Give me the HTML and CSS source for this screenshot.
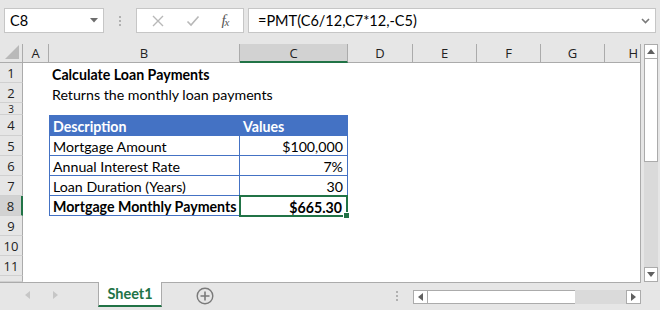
FILE: index.html
```html
<!DOCTYPE html>
<html lang="en">
<head>
    <meta charset="UTF-8">
    <title>Calculate Loan Payments</title>
    <link rel="stylesheet" href="styles.css">
</head>
<body>
    <div class="topbar">
        <div class="namebox">
            <span>C8</span>
            <svg class="caret" width="8" height="5" viewBox="0 0 8 5"><path d="M0 0h8L4 4.5z" fill="#6d6d6d"/></svg>
        </div>
        <div class="grip"><i></i><i></i><i></i></div>
        <div class="fbuttons">
            <svg width="14" height="14" viewBox="0 0 14 14"><path d="M2 2l10 10M12 2L2 12" stroke="#b8b8b8" stroke-width="1.4" fill="none"/></svg>
            <svg width="14" height="14" viewBox="0 0 14 14"><path d="M1.5 7.5l3.5 3.5L12.5 2.5" stroke="#b8b8b8" stroke-width="1.6" fill="none"/></svg>
            <span class="fx">f<sub>x</sub></span>
        </div>
        <div class="formula">
            <span>=PMT(C6/12,C7*12,-C5)</span>
            <svg width="9" height="6" viewBox="0 0 9 6"><path d="M1 1l3.5 3.5L8 1" stroke="#7a7a7a" stroke-width="1.6" fill="none"/></svg>
        </div>
    </div>

    <div class="main">
        <div class="sheet">
            <div class="corner"><svg width="14" height="14" viewBox="0 0 14 14"><path d="M14 0v14H0z" fill="#b9b9b9"/></svg></div>
            <div class="colhead">A</div>
            <div class="colhead">B</div>
            <div class="colhead active">C</div>
            <div class="colhead">D</div>
            <div class="colhead">E</div>
            <div class="colhead">F</div>
            <div class="colhead">G</div>
            <div class="colhead last">H</div>

            <div class="rowhead">1</div>
            <div class="cell"></div>
            <div class="cell title">Calculate Loan Payments</div>
            <div class="cell"></div><div class="cell"></div><div class="cell"></div><div class="cell"></div><div class="cell"></div><div class="cell"></div>

            <div class="rowhead">2</div>
            <div class="cell"></div>
            <div class="cell sub">Returns the monthly loan payments</div>
            <div class="cell"></div><div class="cell"></div><div class="cell"></div><div class="cell"></div><div class="cell"></div><div class="cell"></div>

            <div class="rowhead short">3</div>
            <div class="cell"></div><div class="cell"></div><div class="cell"></div><div class="cell"></div><div class="cell"></div><div class="cell"></div><div class="cell"></div><div class="cell"></div>

            <div class="rowhead">4</div>
            <div class="cell"></div>
            <div class="cell tb th first top">Description</div>
            <div class="cell tb th top">Values</div>
            <div class="cell"></div><div class="cell"></div><div class="cell"></div><div class="cell"></div><div class="cell"></div>

            <div class="rowhead">5</div>
            <div class="cell"></div>
            <div class="cell tb first">Mortgage Amount</div>
            <div class="cell tb num">$100,000</div>
            <div class="cell"></div><div class="cell"></div><div class="cell"></div><div class="cell"></div><div class="cell"></div>

            <div class="rowhead">6</div>
            <div class="cell"></div>
            <div class="cell tb first">Annual Interest Rate</div>
            <div class="cell tb num">7%</div>
            <div class="cell"></div><div class="cell"></div><div class="cell"></div><div class="cell"></div><div class="cell"></div>

            <div class="rowhead">7</div>
            <div class="cell"></div>
            <div class="cell tb first">Loan Duration (Years)</div>
            <div class="cell tb num">30</div>
            <div class="cell"></div><div class="cell"></div><div class="cell"></div><div class="cell"></div><div class="cell"></div>

            <div class="rowhead active">8</div>
            <div class="cell"></div>
            <div class="cell tb first bold">Mortgage Monthly Payments</div>
            <div class="cell tb num bold selected">$665.30</div>
            <div class="cell"></div><div class="cell"></div><div class="cell"></div><div class="cell"></div><div class="cell"></div>

            <div class="rowhead">9</div>
            <div class="cell"></div><div class="cell"></div><div class="cell"></div><div class="cell"></div><div class="cell"></div><div class="cell"></div><div class="cell"></div><div class="cell"></div>

            <div class="rowhead">10</div>
            <div class="cell"></div><div class="cell"></div><div class="cell"></div><div class="cell"></div><div class="cell"></div><div class="cell"></div><div class="cell"></div><div class="cell"></div>

            <div class="rowhead">11</div>
            <div class="cell"></div><div class="cell"></div><div class="cell"></div><div class="cell"></div><div class="cell"></div><div class="cell"></div><div class="cell"></div><div class="cell"></div>

            <div class="rowhead"></div>
            <div class="cell"></div><div class="cell"></div><div class="cell"></div><div class="cell"></div><div class="cell"></div><div class="cell"></div><div class="cell"></div><div class="cell"></div>
        </div>
        <div class="vscroll">
            <div class="sbtn"><svg width="8" height="5" viewBox="0 0 8 5"><path d="M0 5h8L4 0z" fill="#606060"/></svg></div>
            <div class="vthumb"></div>
            <div class="vtrack"></div>
            <div class="sbtn"><svg width="8" height="5" viewBox="0 0 8 5"><path d="M0 0h8L4 5z" fill="#606060"/></svg></div>
        </div>
    </div>

    <div class="tabbar">
        <div class="navarrows">
            <svg width="5" height="8" viewBox="0 0 5 8"><path d="M5 0v8L0 4z" fill="#c6c6c6"/></svg>
            <svg width="5" height="8" viewBox="0 0 5 8"><path d="M0 0v8l5-4z" fill="#c6c6c6"/></svg>
        </div>
        <div class="tab">Sheet1</div>
        <div class="addsheet">
            <svg width="18" height="18" viewBox="0 0 18 18"><circle cx="9" cy="9" r="7.8" stroke="#7a7a7a" stroke-width="1.4" fill="none"/><path d="M9 4.5v9M4.5 9h9" stroke="#7a7a7a" stroke-width="1.6"/></svg>
        </div>
        <div class="grip tabgrip"><i></i><i></i><i></i></div>
        <div class="hscroll">
            <div class="sbtn"><svg width="5" height="8" viewBox="0 0 5 8"><path d="M5 0v8L0 4z" fill="#606060"/></svg></div>
            <div class="hthumb"></div>
            <div class="htrack"></div>
            <div class="sbtn"><svg width="5" height="8" viewBox="0 0 5 8"><path d="M0 0v8l5-4z" fill="#606060"/></svg></div>
        </div>
    </div>
</body>
</html>
```

FILE: styles.css
```css
body {
    margin: 0;
    width: 660px;
    height: 310px;
    overflow: hidden;
    background-color: #e6e6e6;
    font-family: 'Lato', 'Liberation Sans', sans-serif;
    color: #000;
}

/* Barra de fórmulas */
.topbar {
    height: 44px;
    display: flex;
    align-items: flex-start;
    padding-top: 8px;
    box-sizing: border-box;
}
.namebox {
    margin-left: 4px;
    width: 100px;
    height: 25px;
    box-sizing: border-box;
    background: #fff;
    border: 1px solid #c6c6c6;
    display: flex;
    align-items: center;
    justify-content: space-between;
    padding: 0 5px 0 5px;
    font-size: 14.5px;
}
.grip {
    width: 32px;
    height: 25px;
    display: flex;
    flex-direction: column;
    align-items: center;
    justify-content: center;
    gap: 2px;
}
.grip i {
    width: 2px;
    height: 2px;
    background: #b0b0b0;
}
.fbuttons {
    width: 108px;
    height: 25px;
    box-sizing: border-box;
    background: #fff;
    border: 1px solid #c6c6c6;
    display: flex;
    align-items: center;
    justify-content: space-around;
    padding: 0 4px 0 4px;
}
.fx {
    font-family: 'Liberation Serif', serif;
    font-style: italic;
    font-size: 15px;
    color: #555;
    letter-spacing: -1px;
}
.fx sub {
    font-size: 11px;
    vertical-align: -1px;
}
.formula {
    margin-left: 4px;
    width: 408px;
    height: 25px;
    box-sizing: border-box;
    background: #fff;
    border: 1px solid #c6c6c6;
    display: flex;
    align-items: center;
    justify-content: space-between;
    padding: 0 5px 0 9px;
    font-size: 14.5px;
}

/* Planilha */
.main {
    display: flex;
}
.sheet {
    display: grid;
    grid-template-columns: 23px 26px 191px 108px 65px 64px 64px 64px 35px;
    grid-template-rows: 19px 20px 20px 12px 21px 20px 20px 20px 20px 20px 20px 20px 6px;
    background: #fff;
    border-right: 1px solid #ababab;
    border-bottom: 1px solid #ababab;
    width: 641px;
    box-sizing: border-box;
    overflow: hidden;
}
.corner {
    background: #e6e6e6;
    border-right: 1px solid #ababab;
    border-bottom: 1px solid #ababab;
    display: flex;
    align-items: flex-end;
    justify-content: flex-end;
    padding: 0 3px 3px 0;
}
.colhead {
    background: #e6e6e6;
    border-right: 1px solid #ababab;
    border-bottom: 1px solid #ababab;
    font-family: 'Open Sans', sans-serif;
    font-size: 13px;
    color: #222;
    display: flex;
    align-items: center;
    justify-content: center;
}
.colhead.last {
    border-right: none;
    justify-content: flex-end;
    padding-right: 2px;
}
.colhead.active {
    background: #d2d2d2;
    border-bottom: 2px solid #217346;
}
.rowhead {
    background: #e6e6e6;
    border-right: 1px solid #ababab;
    border-bottom: 1px solid #d0d0d0;
    font-family: 'Open Sans', sans-serif;
    font-size: 13px;
    color: #222;
    display: flex;
    align-items: center;
    justify-content: center;
    overflow: hidden;
}
.rowhead.short {
    font-size: 10px;
    line-height: 10px;
}
.rowhead.active {
    background: #d2d2d2;
    border-right: 2px solid #217346;
}
.cell {
    font-size: 14.2px;
    display: flex;
    align-items: center;
    padding: 2px 3px 0;
    white-space: nowrap;
    box-sizing: border-box;
}
.title {
    font-weight: 700;
}
.tb {
    border-right: 1px solid #4472c4;
    border-bottom: 1px solid #4472c4;
}
.tb.first {
    border-left: 1px solid #4472c4;
}
.tb.top {
    border-top: 1px solid #4472c4;
}
.th {
    background: #4472c4;
    color: #fff;
    font-weight: 700;
}
.num {
    justify-content: flex-end;
    padding-right: 4px;
}
.bold {
    font-weight: 700;
}
.selected {
    position: relative;
    border: 2px solid #217346;
    margin: -1px 0 -1px -1px;
}
.selected::after {
    content: "";
    position: absolute;
    right: -4px;
    bottom: -4px;
    width: 5px;
    height: 5px;
    background: #217346;
    border: 1px solid #fff;
}

/* Barras de rolagem */
.vscroll {
    width: 19px;
    height: 238px;
    display: flex;
    flex-direction: column;
    padding: 0 2px 0 3px;
    box-sizing: border-box;
}
.sbtn {
    background: #fff;
    border: 1px solid #ababab;
    box-sizing: border-box;
    display: flex;
    align-items: center;
    justify-content: center;
}
.vscroll .sbtn {
    height: 15px;
}
.vthumb {
    height: 103px;
    background: #fff;
    border: 1px solid #ababab;
    border-top: none;
    box-sizing: border-box;
}
.vtrack {
    flex: 1;
    background: #dadada;
}

/* Abas */
.tabbar {
    height: 28px;
    display: flex;
    align-items: flex-start;
}
.navarrows {
    width: 98px;
    height: 24px;
    display: flex;
    align-items: center;
    gap: 23px;
    padding-left: 25px;
    box-sizing: border-box;
}
.tab {
    width: 64px;
    box-sizing: border-box;
    background: #fff;
    border-left: 1px solid #ababab;
    border-right: 1px solid #ababab;
    border-bottom: 2px solid #217346;
    margin-top: -1px;
    height: 25px;
    color: #217346;
    font-weight: 700;
    font-size: 14.5px;
    display: flex;
    align-items: center;
    justify-content: center;
}
.addsheet {
    width: 85px;
    height: 26px;
    display: flex;
    align-items: center;
    justify-content: center;
}
.tabgrip {
    margin-left: 142px;
    width: 16px;
    height: 26px;
}
.hscroll {
    margin-top: 7px;
    width: 228px;
    height: 14px;
    display: flex;
    margin-left: 8px;
}
.hscroll .sbtn {
    width: 15px;
}
.hthumb {
    width: 147px;
    background: #fff;
    border-top: 1px solid #ababab;
    border-bottom: 1px solid #ababab;
    box-sizing: border-box;
}
.htrack {
    flex: 1;
    background: #dadada;
}
```
